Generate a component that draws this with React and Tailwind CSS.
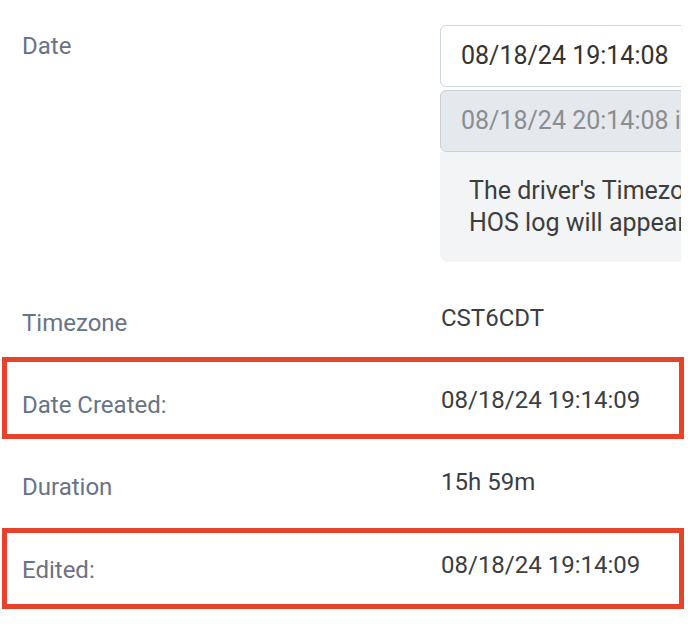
export default function App() {
  const rows = [
    { label: "Timezone", value: "CST6CDT", h: "h-[95px]", lpt: "pt-[41px]", vpt: "pt-[36px]", marked: false },
    { label: "Date Created:", value: "08/18/24 19:14:09", h: "h-[82px]", lpt: "pt-[28px]", vpt: "pt-[23px]", marked: true },
    { label: "Duration", value: "15h 59m", h: "h-[89px]", lpt: "pt-[28px]", vpt: "pt-[23px]", marked: false },
    { label: "Edited:", value: "08/18/24 19:14:09", h: "h-[81px]", lpt: "pt-[22px]", vpt: "pt-[17px]", marked: true },
  ];

  return (
    <div className="h-[626px] w-[688px] overflow-hidden bg-white font-['Roboto',sans-serif] text-[24px] leading-[30px]">
      {/* date field */}
      <div className="flex h-[262px] w-[681px] overflow-hidden">
        <div className="w-[440px] shrink-0 pl-[22px] pt-[31px] text-[#687386]">Date</div>
        <div className="flex w-[320px] shrink-0 flex-col pt-[25px]">
          <div className="flex h-[62px] items-center rounded-md border border-[#cfd5dd] bg-white pl-[20px] text-[25px] text-[#333]">
            08/18/24 19:14:08
          </div>
          <div className="mt-[3px] flex h-[62px] items-center whitespace-nowrap rounded-md border border-[#c9d0d9] bg-[#e5e8ed] pl-[20px] text-[25px] text-[#8a8d92]">
            08/18/24 20:14:08 in your timezone
          </div>
          <div className="h-[110px] whitespace-nowrap rounded-b-lg bg-[#f3f4f6] pl-[29px] pt-[23px] text-[25px] leading-[32px] text-[#3d3d3d]">
            The driver's Timezone is different than yours.
            <br />
            HOS log will appear in the driver's timezone.
          </div>
        </div>
      </div>

      {rows.map((r) => (
        <div
          key={r.label}
          className={`mx-[2px] flex w-[682px] border-[5px] ${r.h} ${r.marked ? "border-[#e6432b]" : "border-transparent"}`}
        >
          <div className={`w-[434px] shrink-0 pl-[15px] text-[#687386] ${r.lpt}`}>{r.label}</div>
          <div className={`text-[#3a3d42] ${r.vpt}`}>{r.value}</div>
        </div>
      ))}
    </div>
  );
}
